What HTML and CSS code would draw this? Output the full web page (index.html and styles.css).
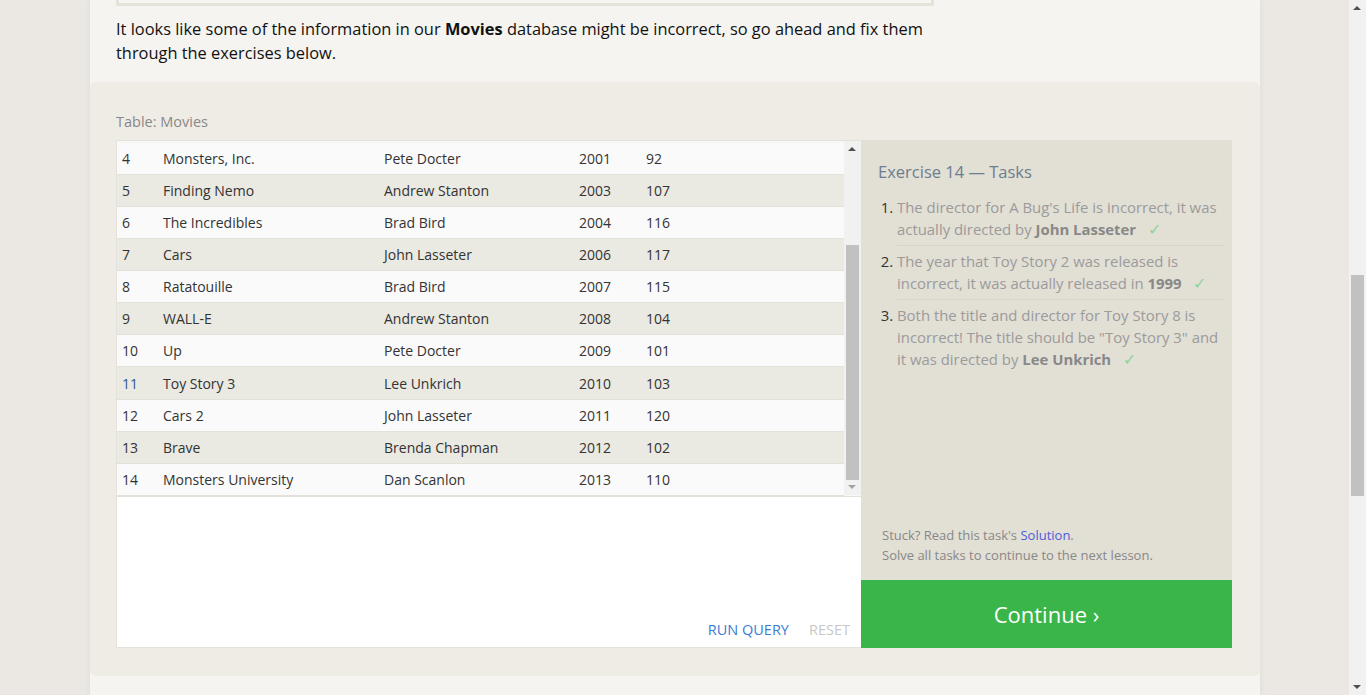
FILE: index.html
```html
<!DOCTYPE html>
<html>
<head>
<meta charset="utf-8">
<link rel="stylesheet" href="styles.css">
</head>
<body>
<div class="page">
  <div class="column">
    <div class="top-box"></div>
    <p class="intro">It looks like some of the information in our <b>Movies</b> database might be incorrect, so go ahead and fix them through the exercises below.</p>
    <div class="exercise">
      <div class="table-label">Table: Movies</div>
      <div class="workspace">
        <div class="editor">
          <div class="table-wrap">
            <div class="rows">
              <div class="row"><span class="c-id">4</span><span class="c-title">Monsters, Inc.</span><span class="c-dir">Pete Docter</span><span class="c-year">2001</span><span class="c-len">92</span></div>
              <div class="row alt"><span class="c-id">5</span><span class="c-title">Finding Nemo</span><span class="c-dir">Andrew Stanton</span><span class="c-year">2003</span><span class="c-len">107</span></div>
              <div class="row"><span class="c-id">6</span><span class="c-title">The Incredibles</span><span class="c-dir">Brad Bird</span><span class="c-year">2004</span><span class="c-len">116</span></div>
              <div class="row alt"><span class="c-id">7</span><span class="c-title">Cars</span><span class="c-dir">John Lasseter</span><span class="c-year">2006</span><span class="c-len">117</span></div>
              <div class="row"><span class="c-id">8</span><span class="c-title">Ratatouille</span><span class="c-dir">Brad Bird</span><span class="c-year">2007</span><span class="c-len">115</span></div>
              <div class="row alt"><span class="c-id">9</span><span class="c-title">WALL-E</span><span class="c-dir">Andrew Stanton</span><span class="c-year">2008</span><span class="c-len">104</span></div>
              <div class="row"><span class="c-id">10</span><span class="c-title">Up</span><span class="c-dir">Pete Docter</span><span class="c-year">2009</span><span class="c-len">101</span></div>
              <div class="row alt tall"><span class="c-id blue">11</span><span class="c-title">Toy Story 3</span><span class="c-dir">Lee Unkrich</span><span class="c-year">2010</span><span class="c-len">103</span></div>
              <div class="row"><span class="c-id">12</span><span class="c-title">Cars 2</span><span class="c-dir">John Lasseter</span><span class="c-year">2011</span><span class="c-len">120</span></div>
              <div class="row alt"><span class="c-id">13</span><span class="c-title">Brave</span><span class="c-dir">Brenda Chapman</span><span class="c-year">2012</span><span class="c-len">102</span></div>
              <div class="row"><span class="c-id">14</span><span class="c-title">Monsters University</span><span class="c-dir">Dan Scanlon</span><span class="c-year">2013</span><span class="c-len">110</span></div>
            </div>
            <div class="scrollbar small">
              <div class="arrow up"></div>
              <div class="track"><div class="thumb"></div></div>
              <div class="arrow down dim"></div>
            </div>
          </div>
          <div class="query-area">
            <div class="actions">
              <span class="run">RUN QUERY</span>
              <span class="reset">RESET</span>
            </div>
          </div>
        </div>
        <div class="tasks">
          <div class="tasks-body">
            <h3 class="tasks-title">Exercise 14 — Tasks</h3>
            <ol class="task-list">
              <li>The director for A Bug's Life is incorrect, it was actually directed by <b>John Lasseter</b><span class="check">✓</span></li>
              <li>The year that Toy Story 2 was released is incorrect, it was actually released in <b>1999</b><span class="check">✓</span></li>
              <li>Both the title and director for Toy Story 8 is incorrect! The title should be "Toy Story 3" and it was directed by <b>Lee Unkrich</b><span class="check">✓</span></li>
            </ol>
            <div class="stuck">
              <div>Stuck? Read this task's <span class="link">Solution</span>.</div>
              <div>Solve all tasks to continue to the next lesson.</div>
            </div>
          </div>
          <div class="continue">Continue ›</div>
        </div>
      </div>
    </div>
    <div class="after"></div>
  </div>
</div>
<div class="scrollbar page-scroll">
  <div class="arrow up"></div>
  <div class="track"><div class="thumb"></div></div>
  <div class="arrow down"></div>
</div>
</body>
</html>
```

FILE: styles.css
```css
* { box-sizing: border-box; }
html, body { margin: 0; padding: 0; height: 100%; overflow: hidden; }
body {
  display: flex;
  background: #ebe7e3;
  font-family: "Open Sans", "Noto Sans", sans-serif;
  color: #222;
}
.page {
  flex: 1;
  height: 695px;
  overflow: hidden;
}
.column {
  margin-left: 90px;
  width: 1170px;
  height: 100%;
  background: #f5f4f0;
  box-shadow: 0 0 6px rgba(0,0,0,0.06);
  display: flex;
  flex-direction: column;
}
.top-box {
  margin-left: 26px;
  width: 818px;
  height: 6px;
  border-left: 3px solid #e4e3d9;
  border-right: 3px solid #e4e3d9;
  border-bottom: 3px solid #e4e3d9;
  background: #f7f6f2;
}
.intro {
  margin: 11px 0 17px 26px;
  width: 830px;
  font-size: 16.4px;
  line-height: 24px;
  color: #111;
}
.intro b { font-weight: 700; }
.exercise {
  background: #efece5;
  border-radius: 6px;
  padding: 30px 28px 28px 26px;
}
.table-label {
  font-size: 14.5px;
  line-height: 20px;
  color: #888;
  margin-bottom: 8px;
}
.workspace {
  display: flex;
}
.editor {
  width: 745px;
  background: #fff;
  border: 1px solid #e4e2da;
  border-right: none;
  display: flex;
  flex-direction: column;
  height: 508px;
}
.table-wrap {
  display: flex;
  height: 356px;
  border-bottom: 1px solid #e2e1da;
  padding-top: 2px;
  background: #f7f7f5;
}
.rows { flex: 1; }
.row {
  display: flex;
  height: 32px;
  align-items: center;
  font-size: 14px;
  color: #333;
  background: #fafafa;
  border-bottom: 1px solid #e2e1da;
}
.row.tall { height: 33px; padding-top: 1px; }
.row.alt { background: #eae9e2; }
.c-id { width: 46px; padding-left: 5px; }
.c-id.blue { color: #2a5a8a; }
.c-title { width: 221px; }
.c-dir { width: 195px; }
.c-year { width: 67px; }
.c-len { width: 60px; }

.scrollbar {
  width: 17px;
  background: #f1f1f1;
  display: flex;
  flex-direction: column;
}
.scrollbar .arrow {
  height: 17px;
  position: relative;
}
.scrollbar .arrow::after {
  content: "";
  position: absolute;
  left: 4px;
  width: 0;
  height: 0;
  border-left: 4px solid transparent;
  border-right: 4px solid transparent;
}
.scrollbar .arrow.up::after {
  top: 6px;
  border-bottom: 4px solid #505050;
}
.scrollbar .arrow.down::after {
  top: 7px;
  border-top: 4px solid #505050;
}
.scrollbar .arrow.down.dim::after { border-top-color: #a3a3a3; }
.scrollbar .track {
  flex: 1;
  position: relative;
}
.scrollbar .thumb {
  position: absolute;
  left: 2px;
  right: 2px;
  background: #c1c1c1;
}
.scrollbar.small { height: 354px; margin-top: -2px; }
.scrollbar.small .thumb { top: 87px; height: 235px; }
.page-scroll {
  height: 695px;
  flex: 0 0 17px;
}
.page-scroll .thumb { top: 258px; height: 221px; left: 2px; right: 2px; }

.query-area {
  flex: 1;
  display: flex;
  align-items: flex-end;
  justify-content: flex-end;
  padding: 0 11px 7px 0;
}
.actions {
  display: flex;
  gap: 20px;
  font-size: 14.5px;
  line-height: 20px;
}
.run { color: #3a7bd5; }
.reset { color: #c8c8c8; }

.tasks {
  width: 371px;
  height: 508px;
  display: flex;
  flex-direction: column;
  background: #e2dfd5;
}
.tasks-body {
  flex: 1;
  padding: 20px 8px 15px 17px;
  display: flex;
  flex-direction: column;
}
.tasks-title {
  margin: 0 0 12px 0;
  font-weight: 400;
  font-size: 16.5px;
  line-height: 24px;
  color: #6b7d8f;
}
.task-list {
  margin: 0;
  padding-left: 19px;
  font-size: 14.9px;
  line-height: 22px;
  color: #9b9b9b;
}
.task-list li {
  padding: 4px 0 5px 0;
  border-bottom: 1px solid #d6d3c9;
}
.task-list li:first-child { padding-top: 0; }
.task-list li:last-child { border-bottom: none; }
.task-list li::marker { color: #333; }
.task-list b { color: #888; font-weight: 700; }
.check {
  color: #8fd49a;
  margin-left: 12px;
  font-size: 16px;
}
.stuck {
  margin-top: auto;
  margin-left: 4px;
  font-size: 13px;
  line-height: 20px;
  color: #888;
}
.link { color: #4a5ddc; }
.continue {
  height: 68px;
  background: #3ab54a;
  color: #fff;
  font-size: 22px;
  display: flex;
  align-items: center;
  justify-content: center;
}
.after { flex: 1; }
```
